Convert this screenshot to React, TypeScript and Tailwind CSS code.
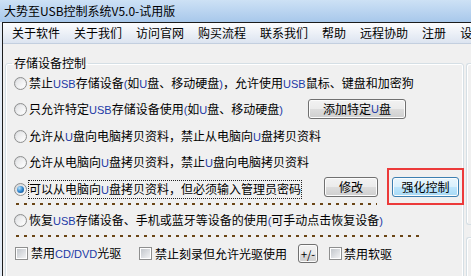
import type { ReactNode } from "react";

// Latin bits inside the Chinese labels render narrow and bluish in the original
function En({ children }: { children: ReactNode }) {
  return (
    <span className="font-['Liberation_Sans_Narrow','Liberation_Sans',sans-serif] text-[11px] text-[#1b3aa6]">
      {children}
    </span>
  );
}

function Radio({ checked = false }: { checked?: boolean }) {
  return (
    <span className="flex h-[13px] w-[13px] shrink-0 items-center justify-center rounded-full border border-[#8e8f8f] bg-gradient-to-br from-[#d3d5d8] to-[#fdfdfd]">
      {checked ? (
        <span className="h-[7px] w-[7px] rounded-full bg-radial-[at_35%_30%] from-[#b9e4fc] via-[#2f86cf] to-[#0c3f7d]" />
      ) : (
        <span className="h-[9px] w-[9px] rounded-full bg-gradient-to-br from-[#e1e2e4] to-[#ffffff]" />
      )}
    </span>
  );
}

function Check() {
  return (
    <span className="flex h-[13px] w-[13px] shrink-0 items-center justify-center border border-[#8e8f8f] bg-white">
      <span className="h-[9px] w-[9px] bg-gradient-to-br from-[#c3c7cc] to-[#f1f2f4]" />
    </span>
  );
}

interface BtnProps {
  className: string;
  hot?: boolean;
  children: ReactNode;
}

function Btn({ className, hot, children }: BtnProps) {
  const skin = hot
    ? "border-[#3c7fb1] bg-[linear-gradient(#eaf6fd_0%,#d9f0fc_50%,#bee6fd_50%,#a7d9f5_100%)]"
    : "border-[#707070] bg-[linear-gradient(#f2f2f2_0%,#ebebeb_50%,#dddddd_50%,#cfcfcf_100%)]";
  return (
    <button
      type="button"
      className={`flex shrink-0 items-center justify-center rounded-[3px] border shadow-[inset_0_0_0_1px_#fcfcfc] ${skin} ${className}`}
    >
      {children}
    </button>
  );
}

function Dashes({ width }: { width: string }) {
  return (
    <div
      className={`ml-[10px] h-[2px] bg-[repeating-linear-gradient(90deg,#6a4516_0_3px,transparent_3px_8px)] ${width}`}
    />
  );
}

const menu = ["关于软件", "关于我们", "访问官网", "购买流程", "联系我们", "帮助", "远程协助", "注册", "设置"];

export default function App() {
  return (
    <div className="h-[276px] w-[471px] overflow-hidden bg-[#f0f0f0] font-['Noto_Sans_CJK_SC',sans-serif] text-[12px] leading-[16px] text-black">
      <div className="flex h-[22px] items-center bg-gradient-to-b from-[#cde1f5] to-[#a8c8eb] pl-[4px]">
        大势至USB控制系统V5.0-试用版
      </div>

      <div className="flex h-[254px]">
        <div className="w-[2px] bg-[#e4ecf6]" />
        <div className="flex min-w-0 flex-1 flex-col border-l border-t border-[#1c1c1c]">
          <div className="flex h-[21px] shrink-0 items-center whitespace-nowrap border-b border-[#c3cfdf] bg-gradient-to-b from-[#fdfdfe] to-[#dce4f0] pl-[2px]">
            {menu.map((m) => (
              <span key={m} className="px-[7px]">
                {m}
              </span>
            ))}
          </div>

          <div className="flex">
            <fieldset className="mt-[11px] ml-[2px] w-[459px] shrink-0 rounded-[3px] border border-[#d5dfe5] shadow-[inset_0_0_0_1px_#ffffff]">
              <legend className="ml-[6px] px-[2px]">存储设备控制</legend>

              <div className="flex h-[24px] items-center pl-[8px]">
                <Radio />
                <span className="ml-[2px] whitespace-nowrap">
                  禁止<En>USB</En>存储设备<En>(</En>如<En>U</En>盘、移动硬盘<En>)</En>，允许使用<En>USB</En>鼠标、键盘和加密狗
                </span>
              </div>

              <div className="flex h-[28px] items-center pl-[8px]">
                <div className="flex w-[294px] items-center">
                  <Radio />
                  <span className="ml-[2px] whitespace-nowrap">
                    只允许特定<En>USB</En>存储设备使用<En>(</En>如<En>U</En>盘、移动硬盘<En>)</En>
                  </span>
                </div>
                <Btn className="h-[20px] w-[98px]">
                  添加特定<En>U</En>盘
                </Btn>
              </div>

              <div className="flex h-[26px] items-center pl-[8px]">
                <Radio />
                <span className="ml-[2px] whitespace-nowrap">
                  允许从<En>U</En>盘向电脑拷贝资料，禁止从电脑向<En>U</En>盘拷贝资料
                </span>
              </div>

              <div className="flex h-[26px] items-center pl-[8px]">
                <Radio />
                <span className="ml-[2px] whitespace-nowrap">
                  允许从电脑向<En>U</En>盘拷贝资料，禁止<En>U</En>盘向电脑拷贝资料
                </span>
              </div>

              <div className="flex h-[28px] items-center pl-[8px]">
                <div className="flex w-[310px] items-center">
                  <Radio checked />
                  <span className="ml-[2px] whitespace-nowrap outline-1 outline-dotted outline-[#222]">
                    可以从电脑向<En>U</En>盘拷贝资料，但必须输入管理员密码
                  </span>
                </div>
                <Btn className="mt-[-4px] h-[20px] w-[54px]">修改</Btn>
                <div className="relative mt-[-4px] ml-[14px]">
                  <Btn hot className="h-[20px] w-[67px]">
                    强化控制
                  </Btn>
                  <span className="pointer-events-none absolute top-[-9px] left-[-5px] h-[37px] w-[77px] border-2 border-[#ec3a3a]" />
                </div>
              </div>

              <Dashes width="w-[361px]" />

              <div className="flex h-[30px] items-center pl-[8px]">
                <Radio />
                <span className="ml-[2px] whitespace-nowrap">
                  恢复<En>USB</En>存储设备、手机或蓝牙等设备的使用<En>(</En>可手动点击恢复设备<En>)</En>
                </span>
              </div>

              <Dashes width="w-[407px]" />

              <div className="flex h-[33px] items-center pl-[9px]">
                <div className="flex w-[124px] items-center">
                  <Check />
                  <span className="ml-[3px] whitespace-nowrap">
                    禁用<En>CD/DVD</En>光驱
                  </span>
                </div>
                <div className="flex w-[159px] items-center">
                  <Check />
                  <span className="ml-[3px] whitespace-nowrap">禁止刻录但允许光驱使用</span>
                </div>
                <Btn className="h-[19px] w-[20px] text-[11px]">+/-</Btn>
                <div className="ml-[11px] flex items-center">
                  <Check />
                  <span className="ml-[2px] whitespace-nowrap">禁用软驱</span>
                </div>
              </div>
            </fieldset>

            <div className="mt-[19px] ml-[2px] flex w-[20px] shrink-0 flex-col">
              <div className="h-[162px] rounded-l-[3px] border-y border-l border-[#d5dfe5] shadow-[inset_1px_1px_0_#ffffff]" />
              <div className="mt-[12px] h-[60px] rounded-tl-[3px] border-t border-l border-[#d5dfe5] shadow-[inset_1px_1px_0_#ffffff]" />
            </div>
          </div>
        </div>
      </div>
    </div>
  );
}
